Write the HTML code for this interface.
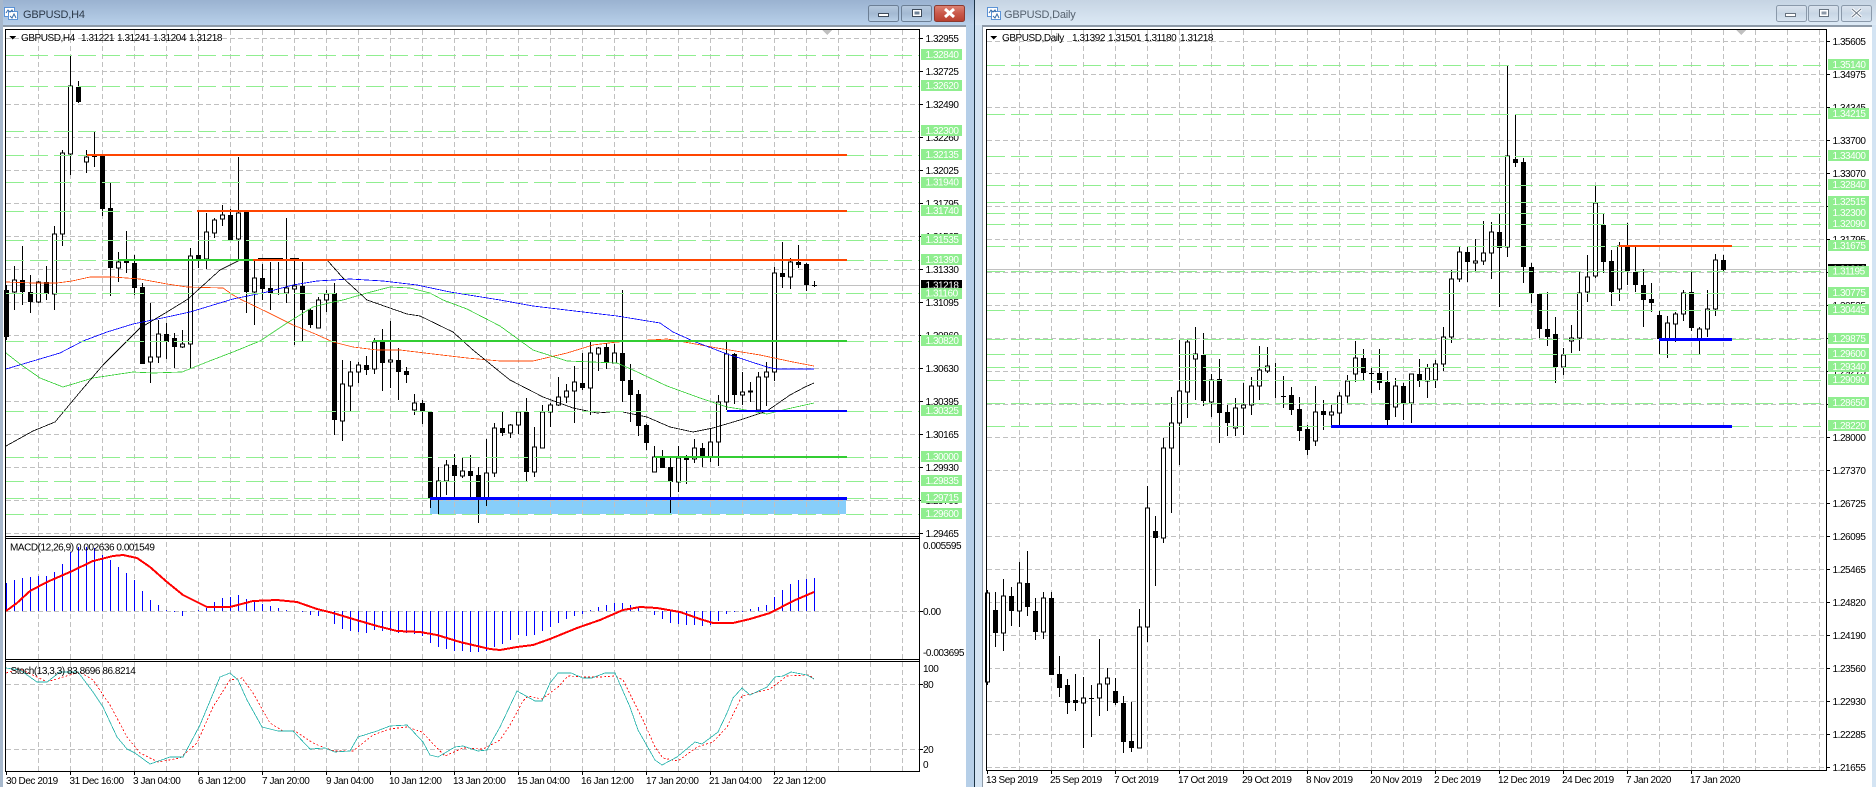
<!DOCTYPE html>
<html><head><meta charset="utf-8"><title>GBPUSD</title>
<style>
html,body{margin:0;padding:0;background:#fff;width:1876px;height:787px;overflow:hidden}
svg{display:block}
text{font-family:"Liberation Sans",sans-serif;font-size:10px;letter-spacing:-.45px;fill:#000}
.t{font-size:11px;letter-spacing:-.2px}
.w text{fill:#fff}
.c{shape-rendering:crispEdges}
.g{stroke:#c0c0c0;stroke-width:1;fill:none;stroke-dasharray:5 3}
.l{stroke:#90ee90;stroke-width:1;fill:none;stroke-dasharray:18 6}
.wk{stroke:#000;stroke-width:1;fill:none}
.bk{stroke:#000;stroke-width:5;fill:none}
.wh{stroke:#000;stroke-width:1;fill:#fff}
.m{fill:none;stroke-width:.8}
</style></head><body>
<svg width="1876" height="787" viewBox="0 0 1876 787" xmlns="http://www.w3.org/2000/svg">
<defs>
<linearGradient id="a" x1="0" y1="0" x2="0" y2="1"><stop offset="0" stop-color="#9ab2d0"/><stop offset="1" stop-color="#b8d0ea"/></linearGradient>
<linearGradient id="b" x1="0" y1="0" x2="0" y2="1"><stop offset="0" stop-color="#c6d4e3"/><stop offset="1" stop-color="#dce9f5"/></linearGradient>
<linearGradient id="r" x1="0" y1="0" x2="0" y2="1"><stop offset="0" stop-color="#dc8474"/><stop offset=".5" stop-color="#c9584a"/><stop offset="1" stop-color="#b83f2f"/></linearGradient>
<linearGradient id="n" x1="0" y1="0" x2="0" y2="1"><stop offset="0" stop-color="#b6c9de"/><stop offset=".5" stop-color="#a3b9d2"/><stop offset="1" stop-color="#bcd2e8"/></linearGradient>
<linearGradient id="o" x1="0" y1="0" x2="0" y2="1"><stop offset="0" stop-color="#dbe4ee"/><stop offset=".5" stop-color="#c8d6e5"/><stop offset="1" stop-color="#d9e5f1"/></linearGradient>
</defs>

<!-- window chrome -->
<rect x="0" y="0" width="1876" height="787" fill="#fff"/>
<rect x="0" y="0" width="974" height="25" fill="url(#a)"/>
<rect x="975" y="0" width="901" height="25" fill="url(#b)"/>
<rect x="0" y="0" width="3" height="787" fill="#a7b8cc"/>
<rect x="3" y="25" width="963" height="2" fill="#8d9aa8"/>
<rect x="966" y="25" width="8" height="762" fill="#b6cfe8"/>
<rect x="974" y="0" width="1" height="787" fill="#1c3345"/>
<rect x="975" y="25" width="8" height="762" fill="#d4e4f3"/>
<rect x="982" y="25" width="1" height="762" fill="#8d9aa8"/>
<rect x="983" y="25" width="889" height="2" fill="#8d9aa8"/>
<rect x="1872" y="25" width="4" height="762" fill="#d4e4f3"/>

<!-- icons -->
<g fill="#fff" stroke="#5b93d6" stroke-width="1" class="c">
<path d="M4.5 7.5h10v9h-10z"/><path d="M8.5 11.5h9v8h-9z"/><path d="M987.5 7.5h10v9h-10z"/><path d="M991.5 11.5h9v8h-9z"/>
</g>
<path d="M6 13l2-3 2 2 2-2 1 2M10 16l2 2 2-4 2 4" stroke="#3a6ea8" fill="none"/>
<path d="M989 13l2-3 2 2 2-2 1 2M993 16l2 2 2-4 2 4" stroke="#3a6ea8" fill="none"/>
<text class="t" x="23" y="18" style="fill:#2c3a4a">GBPUSD,H4</text>
<text class="t" x="1004" y="18" style="fill:#56626f">GBPUSD,Daily</text>

<!-- buttons -->
<g stroke="#6c7f95" stroke-width="1">
<rect x="868.5" y="5.5" width="30" height="16" rx="2" fill="url(#n)"/>
<rect x="901.5" y="5.5" width="30" height="16" rx="2" fill="url(#n)"/>
<rect x="934.5" y="5.5" width="30" height="16" rx="2" fill="url(#r)" stroke="#8c3a30"/>
<rect x="1776.5" y="5.5" width="30" height="16" rx="2" fill="url(#o)" stroke="#8a99aa"/>
<rect x="1808.5" y="5.5" width="30" height="16" rx="2" fill="url(#o)" stroke="#8a99aa"/>
<rect x="1841.5" y="5.5" width="30" height="16" rx="2" fill="url(#o)" stroke="#8a99aa"/>
</g>
<g class="c" stroke="#3d4a5a" fill="#fff">
<rect x="878.5" y="13.5" width="10" height="3"/><rect x="912.5" y="9.5" width="9" height="7" fill="#fff"/><rect x="914.5" y="11.5" width="5" height="3" fill="#6e8196" stroke="none"/>
<rect x="1785.5" y="13.5" width="10" height="3" stroke="#66727f"/><rect x="1819.5" y="9.5" width="9" height="7" stroke="#66727f"/><rect x="1821.5" y="11.5" width="5" height="3" fill="#8c99a8" stroke="none"/>
</g>
<path d="M945 9l9 8M954 9l-9 8" stroke="#fff" stroke-width="3" fill="none"/>
<path d="M1852 9l9 8M1861 9l-9 8" stroke="#fff" stroke-width="3" fill="none"/><path d="M1852 9l9 8M1861 9l-9 8" stroke="#6a7684" stroke-width="1" fill="none"/>

<!-- ============ LEFT CHART ============ -->
<g class="c">
<rect x="430" y="499" width="416" height="15" fill="#87cefa"/>
<path class="g" d="M38.5 30V771M70.5 30V771M102.5 30V771M134.5 30V771M166.5 30V771M198.5 30V771M230.5 30V771M262.5 30V771M294.5 30V771M326.5 30V771M358.5 30V771M390.5 30V771M422.5 30V771M454.5 30V771M486.5 30V771M518.5 30V771M550.5 30V771M582.5 30V771M614.5 30V771M646.5 30V771M678.5 30V771M710.5 30V771M742.5 30V771M774.5 30V771M806.5 30V771M838.5 30V771M870.5 30V771M902.5 30V771"/>
<path class="g" d="M6 38.5H919M6 71.5H919M6 104.5H919M6 137.5H919M6 170.5H919M6 203.5H919M6 236.5H919M6 269.5H919M6 302.5H919M6 335.5H919M6 368.5H919M6 401.5H919M6 434.5H919M6 467.5H919M6 500.5H919M6 533.5H919M6 611.5H919M6 684.5H919M6 749.5H919"/>
<path d="M6 285.5H919" stroke="#c0c0c0" fill="none"/>

<path class="wk" d="M6.5 285V340M14.5 266V310M22.5 246V305M30.5 275V313M38.5 281V303M46.5 266V300M54.5 226V310M62.5 150V246M70.5 56V175M78.5 81V103M86.5 150V173M94.5 132V167M92 156.5h5M102.5 155V216M110.5 183V296M118.5 252V282M126.5 231V273M134.5 255V295M142.5 283V364M150.5 303V383M158.5 320V363M166.5 323V359M174.5 333V368M182.5 330V348M190.5 248V368M198.5 212V268M206.5 213V269M214.5 218V238M222.5 205V226M230.5 209V241M238.5 157V260M246.5 211V313M254.5 260V325M262.5 264V300M270.5 262V310M278.5 262V295M276 293.5h5M286.5 218V303M294.5 258V345M302.5 262V342M310.5 308V328M318.5 297V328M326.5 290V312M334.5 283V435M342.5 360V441M350.5 361V411M358.5 362V383M366.5 356V375M374.5 338V374M382.5 329V391M390.5 321V388M398.5 348V400M406.5 367V383M414.5 394V415M422.5 400V424M430.5 412V508M438.5 467V514M446.5 460V495M454.5 454V498M462.5 458V478M470.5 455V497M478.5 467V523M486.5 439V506M494.5 423V477M502.5 412V436M510.5 424V438M518.5 411V434M526.5 398V481M534.5 427V477M542.5 405V448M550.5 403V427M558.5 377V406M566.5 384V403M574.5 366V423M582.5 353V390M590.5 342V415M598.5 347V371M606.5 343V369M614.5 344V363M622.5 290V402M630.5 364V422M638.5 390V436M646.5 424V450M654.5 446V472M662.5 450V468M670.5 458V513M678.5 446V492M686.5 455V484M694.5 439V463M702.5 443V467M710.5 428V462M718.5 395V466M726.5 342V410M734.5 353V404M742.5 372V405M750.5 382V402M758.5 372V411M766.5 362V406M774.5 267V381M782.5 242V288M790.5 258V289M798.5 245V268M806.5 263V291M814.5 281V287M812 285.5h5M258 258.5h25M290 258.5h9"/>

<path class="wh" d="M12.5 280h4v12h-4zM36.5 282h4v20h-4zM52.5 234h4v60h-4zM60.5 153h4v81h-4zM68.5 86h4v68h-4zM84.5 157h4v5h-4zM116.5 262h4v6h-4zM148.5 357h4v5h-4zM156.5 334h4v23h-4zM180.5 344h4v3h-4zM188.5 256h4v88h-4zM204.5 232h4v27h-4zM212.5 220h4v13h-4zM220.5 215h4v4h-4zM236.5 213h4v26h-4zM252.5 278h4v14h-4zM284.5 288h4v5h-4zM292.5 286h4v3h-4zM316.5 300h4v28h-4zM324.5 294h4v6h-4zM340.5 384h4v37h-4zM348.5 372h4v14h-4zM356.5 365h4v7h-4zM372.5 342h4v27h-4zM388.5 360h4v2h-4zM412.5 403h4v7h-4zM436.5 481h4v17h-4zM444.5 465h4v16h-4zM460.5 471h4v5h-4zM484.5 473h4v25h-4zM492.5 428h4v45h-4zM508.5 425h4v8h-4zM516.5 412h4v13h-4zM532.5 447h4v25h-4zM540.5 412h4v36h-4zM548.5 405h4v7h-4zM556.5 397h4v8h-4zM564.5 391h4v6h-4zM572.5 382h4v9h-4zM588.5 353h4v35h-4zM596.5 348h4v6h-4zM612.5 353h4v10h-4zM652.5 457h4v15h-4zM676.5 458h4v24h-4zM692.5 448h4v11h-4zM708.5 442h4v15h-4zM716.5 402h4v40h-4zM724.5 354h4v48h-4zM740.5 392h4v3h-4zM748.5 391h4v1h-4zM756.5 377h4v33h-4zM764.5 372h4v5h-4zM772.5 273h4v99h-4zM788.5 262h4v15h-4z"/>

<path class="bk" d="M6.5 290V337M22.5 280V292M30.5 292V302M46.5 282V294M78.5 87V102M102.5 155V209M110.5 208V268M126.5 261V263M134.5 263V288M142.5 287V364M166.5 334V342M174.5 338V347M198.5 255V259M230.5 215V240M246.5 212V292M262.5 278V289M270.5 288V293M302.5 286V310M310.5 310V325M334.5 293V420M366.5 365V370M382.5 342V363M398.5 360V372M406.5 371V375M422.5 403V412M430.5 412V498M454.5 465V476M470.5 471V476M478.5 475V498M502.5 428V433M526.5 412V472M582.5 383V388M606.5 347V363M622.5 353V381M630.5 380V395M638.5 394V426M646.5 425V443M662.5 458V468M670.5 467V482M686.5 458V460M702.5 448V457M734.5 354V395M782.5 273V277M798.5 262V265M806.5 264V285"/>

<!-- MAs -->
<polyline class="m" stroke="#ff4500" points="6,282 33,283 57,283 72,281 90,277 113,277 140,279 167,284 187,287 223,288 233,295 242,300 267,312 293,325 313,333 333,342 353,347 377,350 400,350 433,354 467,358 500,361 533,361 567,353 593,345 617,342 667,339 690,343 717,348 760,355 793,362 814,366"/>
<polyline class="m" stroke="#0000ff" points="6,369 33,361 60,353 83,341 107,332 133,324 167,317 190,312 233,299 267,292 293,285 317,281 350,279 383,281 417,285 450,292 500,300 533,306 583,312 617,316 660,323 673,332 693,341 727,354 767,367 777,369 814,369"/>
<polyline class="m" stroke="#32cd32" points="6,353 20,364 40,378 63,387 93,378 113,375 133,372 153,373 182,372 207,362 233,352 260,341 287,323 313,307 333,302 343,300 367,293 390,287 410,288 430,293 443,300 467,309 500,326 533,350 567,361 617,363 633,370 667,386 700,398 727,407 740,409 767,414 787,409 814,403"/>
<polyline class="m" stroke="#000" points="6,446 33,431 55,422 65,410 80,392 103,365 140,328 167,312 188,299 220,270 240,260 327,260 343,278 367,300 407,314 420,316 453,332 473,350 500,372 510,380 543,397 573,408 597,413 610,412"/>
<polyline class="m" stroke="#000" points="623,412 647,417 670,427 693,432 713,428 740,420 767,411 790,395 805,387 814,383"/>

<!-- green levels -->
<path class="l" d="M6 55.5H919M6 86.5H919M6 131.5H919M6 155.5H919M6 182.5H919M6 211.5H919M6 240.5H919M6 260.5H919M6 293.5H919M6 341.5H919M6 411.5H919M6 457.5H919M6 481.5H919M6 498.5H919M6 514.5H919"/>

<!-- thick levels -->
<rect x="87" y="154" width="760" height="2" fill="#ff4500"/>
<rect x="197" y="210" width="650" height="2" fill="#ff4500"/>
<rect x="118" y="259" width="135" height="2" fill="#32cd32"/>
<rect x="253" y="259" width="594" height="2" fill="#ff4500"/>
<rect x="373" y="340" width="474" height="2" fill="#32cd32"/>
<rect x="655" y="456" width="192" height="2" fill="#32cd32"/>
<rect x="727" y="410" width="120" height="2" fill="#0000ff"/>
<rect x="430" y="497" width="417" height="3" fill="#0000ff"/>

<!-- MACD -->
<path stroke="#0000ff" fill="none" d="M6.5 611V583M14.5 611V580M22.5 611V578M30.5 611V577M38.5 611V576M46.5 611V576M54.5 611V572M62.5 611V564M70.5 611V552M78.5 611V547M86.5 611V547M94.5 611V548M102.5 611V555M110.5 611V560M118.5 611V567M126.5 611V573M134.5 611V580M142.5 611V591M150.5 611V600M158.5 611V605M166.5 611V610M174.5 611V612M182.5 611V616M198.5 611V610M206.5 611V608M214.5 611V602M222.5 611V598M230.5 611V597M238.5 611V595M246.5 611V599M254.5 611V602M262.5 611V604M270.5 611V606M278.5 611V608M286.5 611V610M302.5 611V612M310.5 611V615M318.5 611V616M326.5 611V612M334.5 611V624M342.5 611V629M350.5 611V631M358.5 611V632M366.5 611V633M374.5 611V630M382.5 611V631M390.5 611V631M398.5 611V633M406.5 611V633M414.5 611V634M422.5 611V636M430.5 611V643M438.5 611V647M446.5 611V649M454.5 611V651M462.5 611V651M470.5 611V652M478.5 611V652M486.5 611V651M494.5 611V647M502.5 611V644M510.5 611V640M518.5 611V635M526.5 611V636M534.5 611V635M542.5 611V631M550.5 611V627M558.5 611V623M566.5 611V619M574.5 611V616M582.5 611V614M590.5 611V610M598.5 611V607M606.5 611V605M614.5 611V603M622.5 611V603M630.5 611V605M638.5 611V608M654.5 611V615M662.5 611V619M670.5 611V623M678.5 611V624M686.5 611V625M694.5 611V625M702.5 611V626M710.5 611V625M718.5 611V621M726.5 611V614M734.5 611V612M742.5 611V612M750.5 611V609M758.5 611V607M766.5 611V605M774.5 611V597M782.5 611V590M790.5 611V584M798.5 611V580M806.5 611V579M814.5 611V578"/>
<polyline fill="none" stroke="#ff0000" stroke-width="2" points="6,611 17,603 30,591 47,582 70,572 93,561 113,556 123,555 137,558 150,567 167,582 183,595 207,607 230,607 253,601 277,600 297,602 317,609 333,613 353,619 377,626 397,631 420,632 437,635 460,642 477,646 490,649 500,650 517,647 533,645 550,639 577,628 600,620 623,610 640,607 657,608 680,612 700,619 713,623 733,623 750,619 770,613 793,601 814,592"/>

<!-- Stoch -->
<polyline fill="none" stroke="#ff0000" stroke-width=".8" stroke-dasharray="2 2" points="6,673 20,669 37,677 47,682 63,677 80,672 93,680 110,705 127,737 140,753 158,762 180,758 197,743 213,707 230,680 242,678 253,693 270,723 283,731 295,731 313,743 325,748 335,751 353,751 373,735 390,729 407,727 422,732 437,748 445,756 463,748 483,749 500,740 510,725 523,701 528,696 542,699 558,687 568,676 585,677 600,677 615,676 623,680 633,700 643,720 655,747 663,758 678,761 697,747 713,742 727,727 742,696 758,692 770,689 787,676 808,675 814,678"/>
<polyline fill="none" stroke="#20b2aa" stroke-width=".8" points="6,668 20,670 37,682 47,682 60,672 78,672 93,692 103,707 117,737 127,749 135,753 150,764 170,757 183,757 200,725 220,677 230,673 238,680 247,700 262,727 278,731 293,731 310,749 325,748 335,752 350,751 358,737 377,731 390,726 407,725 423,742 430,755 438,757 455,747 463,746 478,751 487,750 500,727 517,691 535,701 542,701 550,683 558,673 571,673 583,678 592,678 605,673 615,673 630,707 638,730 655,760 662,765 677,757 695,742 702,744 718,732 727,713 733,698 742,688 750,695 767,687 775,677 783,676 791,672 807,675 814,679"/>

<!-- panes -->
<rect x="5" y="537" width="915" height="1" fill="#fff"/>
<rect x="5" y="660" width="915" height="1" fill="#fff"/>
<path d="M5.5 29V772M5 29.5H920M919.5 29V772M5 536.5H920M5 538.5H920M5 659.5H920M5 661.5H920M5 771.5H920" stroke="#000" fill="none"/>
<path d="M6.5 772v3M70.5 772v3M134.5 772v3M198.5 772v3M262.5 772v3M326.5 772v3M390.5 772v3M454.5 772v3M518.5 772v3M582.5 772v3M646.5 772v3M710.5 772v3M774.5 772v3M920 38.5h3M920 71.5h3M920 104.5h3M920 137.5h3M920 170.5h3M920 203.5h3M920 236.5h3M920 269.5h3M920 302.5h3M920 335.5h3M920 368.5h3M920 401.5h3M920 434.5h3M920 467.5h3M920 500.5h3M920 533.5h3M920 611.5h3M920 684.5h3M920 749.5h3" stroke="#000" fill="none"/>
<path d="M822 30h10l-5 5z" fill="#c0c0c0"/>
<path d="M9 36h7l-3.500 3.500z" fill="#000"/>
</g>

<text x="21" y="41">GBPUSD,H4</text><text x="81" y="41">1.31221</text><text x="117" y="41">1.31241</text><text x="153" y="41">1.31204</text><text x="189" y="41">1.31218</text>
<text x="10" y="550.500">MACD(12,26,9) 0.002636 0.001549</text>
<text x="10.500" y="674">Stoch(13,3,3) 83.8696 86.8214</text>

<g>
<text x="925.500" y="42">1.32955</text><text x="925.500" y="75">1.32725</text><text x="925.500" y="108">1.32490</text><text x="925.500" y="141">1.32260</text><text x="925.500" y="174">1.32025</text><text x="925.500" y="207">1.31795</text><text x="925.500" y="240">1.31565</text><text x="925.500" y="273">1.31330</text><text x="925.500" y="306">1.31095</text><text x="925.500" y="339">1.30860</text><text x="925.500" y="372">1.30630</text><text x="925.500" y="405">1.30395</text><text x="925.500" y="438">1.30165</text><text x="925.500" y="471">1.29930</text><text x="925.500" y="504">1.29700</text><text x="925.500" y="537">1.29465</text>
<text x="923" y="549">0.005595</text><text x="923" y="615">0.00</text><text x="923" y="656">-0.003695</text>
<text x="923" y="672">100</text><text x="923" y="688">80</text><text x="923" y="753">20</text><text x="923" y="768">0</text>
</g>
<rect x="921" y="280" width="41" height="11" fill="#000"/><text x="925.500" y="288.500" style="fill:#fff">1.31218</text>
<g fill="#90ee90" class="c">
<rect x="921" y="49" width="41" height="11"/><rect x="921" y="80" width="41" height="11"/><rect x="921" y="125" width="41" height="11"/><rect x="921" y="149" width="41" height="11"/><rect x="921" y="177" width="41" height="11"/><rect x="921" y="205" width="41" height="11"/><rect x="921" y="234" width="41" height="11"/><rect x="921" y="254" width="41" height="11"/><rect x="921" y="288" width="41" height="11"/><rect x="921" y="335" width="41" height="11"/><rect x="921" y="405" width="41" height="11"/><rect x="921" y="451" width="41" height="11"/><rect x="921" y="475" width="41" height="11"/><rect x="921" y="492" width="41" height="11"/><rect x="921" y="508" width="41" height="11"/>
</g>
<g class="w">
<text x="925.500" y="58">1.32840</text><text x="925.500" y="89">1.32620</text><text x="925.500" y="134">1.32300</text><text x="925.500" y="158">1.32135</text><text x="925.500" y="185.500">1.31940</text><text x="925.500" y="214">1.31740</text><text x="925.500" y="243">1.31535</text><text x="925.500" y="263">1.31390</text><text x="925.500" y="296.500">1.31160</text><text x="925.500" y="344">1.30820</text><text x="925.500" y="414">1.30325</text><text x="925.500" y="460">1.30000</text><text x="925.500" y="484">1.29835</text><text x="925.500" y="501">1.29715</text><text x="925.500" y="517">1.29600</text>
</g>
<g>
<text x="6" y="784">30 Dec 2019</text><text x="69.500" y="784">31 Dec 16:00</text><text x="133" y="784">3 Jan 04:00</text><text x="198" y="784">6 Jan 12:00</text><text x="262" y="784">7 Jan 20:00</text><text x="326" y="784">9 Jan 04:00</text><text x="389" y="784">10 Jan 12:00</text><text x="453" y="784">13 Jan 20:00</text><text x="517" y="784">15 Jan 04:00</text><text x="581" y="784">16 Jan 12:00</text><text x="646" y="784">17 Jan 20:00</text><text x="709" y="784">21 Jan 04:00</text><text x="773" y="784">22 Jan 12:00</text>
</g>

<!-- ============ RIGHT CHART ============ -->
<g class="c">
<path class="g" d="M1019.500 30V770M1051.500 30V770M1083.500 30V770M1115.500 30V770M1147.500 30V770M1179.500 30V770M1211.500 30V770M1243.500 30V770M1275.500 30V770M1307.500 30V770M1339.500 30V770M1371.500 30V770M1403.500 30V770M1435.500 30V770M1467.500 30V770M1499.500 30V770M1531.500 30V770M1563.500 30V770M1595.500 30V770M1627.500 30V770M1659.500 30V770M1691.500 30V770M1723.500 30V770M1755.500 30V770M1787.500 30V770M1819.500 30V770"/>
<path class="g" d="M987 41.500H1826M987 74.500H1826M987 107.500H1826M987 140.500H1826M987 173.500H1826M987 206.500H1826M987 239.500H1826M987 272.500H1826M987 305.500H1826M987 338.500H1826M987 371.500H1826M987 404.500H1826M987 437.500H1826M987 470.500H1826M987 503.500H1826M987 536.500H1826M987 569.500H1826M987 602.500H1826M987 635.500H1826M987 668.500H1826M987 701.500H1826M987 734.500H1826M987 767.500H1826"/>
<path d="M987 269.500H1826" stroke="#c0c0c0" fill="none"/>

<path class="wk" d="M987.500 590V685M995.500 592V647M1003.500 579V651M1011.500 587V626M1019.500 562V627M1027.500 551V616M1035.500 598V640M1043.500 592V639M1051.500 592V675M1059.500 656V697M1067.500 679V714M1075.500 674V711M1083.500 677V748M1091.500 685V737M1089 698.500h5M1099.500 639V716M1107.500 668V711M1115.500 678V705M1123.500 696V753M1131.500 702V752M1139.500 609V748M1147.500 486V642M1155.500 516V586M1163.500 438V543M1171.500 397V513M1179.500 340V465M1187.500 340V418M1195.500 327V400M1203.500 333V406M1211.500 374V417M1219.500 359V443M1227.500 405V436M1235.500 398V436M1243.500 383V435M1251.500 377V415M1259.500 346V400M1267.500 347V373M1275.500 363V398M1283.500 376V408M1281 396.500h5M1291.500 387V415M1299.500 397V441M1307.500 425V455M1315.500 386V446M1323.500 400V430M1331.500 405V427M1339.500 392V427M1347.500 375V403M1355.500 341V382M1363.500 349V380M1371.500 368V393M1369 373.500h5M1379.500 349V390M1387.500 371V425M1395.500 378V417M1403.500 383V420M1411.500 374V423M1419.500 359V387M1427.500 364V398M1435.500 360V388M1443.500 327V371M1451.500 270V343M1459.500 247V282M1467.500 247V282M1475.500 239V272M1483.500 221V265M1491.500 222V279M1499.500 214V307M1507.500 66V257M1515.500 115V167M1523.500 158V283M1531.500 263V303M1539.500 293V338M1547.500 292V346M1555.500 317V383M1563.500 348V375M1571.500 325V353M1579.500 272V351M1587.500 255V302M1595.500 186V278M1603.500 214V273M1611.500 250V306M1619.500 242V301M1627.500 223V285M1635.500 247V292M1643.500 269V327M1651.500 283V312M1659.500 311V354M1667.500 316V358M1675.500 312V342M1683.500 290V321M1691.500 272V331M1699.500 327V354M1707.500 290V337M1715.500 254V316M1723.500 255V271"/>

<path class="wh" d="M985.500 593h4v89h-4zM1001.500 596h4v37h-4zM1017.500 583h4v28h-4zM1041.500 598h4v34h-4zM1081.500 698h4v5h-4zM1097.500 684h4v14h-4zM1105.500 678h4v6h-4zM1137.500 627h4v121h-4zM1145.500 508h4v119h-4zM1161.500 448h4v90h-4zM1169.500 423h4v25h-4zM1177.500 391h4v32h-4zM1185.500 342h4v50h-4zM1193.500 354h4v5h-4zM1209.500 380h4v22h-4zM1233.500 408h4v20h-4zM1241.500 405h4v3h-4zM1249.500 386h4v19h-4zM1257.500 370h4v16h-4zM1265.500 366h4v5h-4zM1313.500 412h4v29h-4zM1329.500 412h4v3h-4zM1337.500 396h4v17h-4zM1345.500 381h4v15h-4zM1353.500 358h4v16h-4zM1393.500 386h4v21h-4zM1409.500 374h4v29h-4zM1425.500 368h4v13h-4zM1433.500 364h4v16h-4zM1441.500 337h4v27h-4zM1449.500 279h4v58h-4zM1457.500 252h4v27h-4zM1473.500 261h4v2h-4zM1481.500 253h4v8h-4zM1489.500 232h4v21h-4zM1505.500 156h4v91h-4zM1561.500 355h4v12h-4zM1569.500 338h4v3h-4zM1577.500 293h4v45h-4zM1585.500 277h4v15h-4zM1593.500 203h4v73h-4zM1617.500 246h4v43h-4zM1665.500 323h4v16h-4zM1673.500 314h4v10h-4zM1681.500 293h4v21h-4zM1697.500 329h4v10h-4zM1705.500 309h4v20h-4zM1713.500 260h4v49h-4z"/>

<path class="bk" d="M995.500 610V633M1011.500 596V611M1027.500 583V607M1035.500 611V632M1051.500 598V675M1059.500 674V688M1067.500 685V703M1075.500 700V703M1115.500 691V703M1123.500 703V742M1131.500 741V748M1155.500 531V538M1203.500 355V401M1219.500 379V413M1227.500 412V423M1291.500 395V410M1299.500 409V431M1307.500 429V450M1323.500 411V415M1363.500 358V373M1379.500 373V383M1387.500 382V420M1403.500 386V403M1419.500 374V381M1467.500 252V262M1499.500 232V248M1515.500 159V163M1523.500 162V267M1531.500 267V293M1539.500 294V329M1547.500 329V337M1555.500 334V367M1603.500 225V262M1611.500 261V292M1627.500 246V271M1635.500 272V285M1643.500 285V300M1651.500 299V303M1659.500 315V339M1691.500 292V328M1723.500 260V270"/>

<path class="l" d="M987 65.500H1826M987 114.500H1826M987 156.500H1826M987 185.500H1826M987 202.500H1826M987 213.500H1826M987 224.500H1826M987 246.500H1826M987 271.500H1826M987 293.500H1826M987 310.500H1826M987 339.500H1826M987 354.500H1826M987 367.500H1826M987 380.500H1826M987 403.500H1826M987 426.500H1826"/>

<rect x="1619" y="245" width="113" height="2" fill="#ff4500"/>
<rect x="1659" y="338" width="73" height="3" fill="#0000ff"/>
<rect x="1331" y="425" width="401" height="3" fill="#0000ff"/>

<path d="M986.500 29V771M986 29.500H1827M1826.500 29V771M986 770.500H1827" stroke="#000" fill="none"/>
<path d="M987.500 771v3M1051.500 771v3M1115.500 771v3M1179.500 771v3M1243.500 771v3M1307.500 771v3M1371.500 771v3M1435.500 771v3M1499.500 771v3M1563.500 771v3M1627.500 771v3M1691.500 771v3M1827 41.500h3M1827 74.500h3M1827 107.500h3M1827 140.500h3M1827 173.500h3M1827 206.500h3M1827 239.500h3M1827 272.500h3M1827 305.500h3M1827 338.500h3M1827 371.500h3M1827 404.500h3M1827 437.500h3M1827 470.500h3M1827 503.500h3M1827 536.500h3M1827 569.500h3M1827 602.500h3M1827 635.500h3M1827 668.500h3M1827 701.500h3M1827 734.500h3M1827 767.500h3" stroke="#000" fill="none"/>
<path d="M1736 30h10l-5 5z" fill="#c0c0c0"/>
<path d="M990 36h7l-3.500 3.500z" fill="#000"/>
</g>

<text x="1002" y="41">GBPUSD,Daily</text><text x="1072" y="41">1.31392</text><text x="1108" y="41">1.31501</text><text x="1144" y="41">1.31180</text><text x="1180" y="41">1.31218</text>

<g>
<text x="1832.500" y="45">1.35605</text><text x="1832.500" y="78">1.34975</text><text x="1832.500" y="111">1.34345</text><text x="1832.500" y="144">1.33700</text><text x="1832.500" y="177">1.33070</text><text x="1832.500" y="210">1.32440</text><text x="1832.500" y="243">1.31795</text><text x="1832.500" y="309">1.30535</text><text x="1832.500" y="342">1.29905</text><text x="1832.500" y="375">1.29275</text><text x="1832.500" y="441">1.28000</text><text x="1832.500" y="474">1.27370</text><text x="1832.500" y="507">1.26725</text><text x="1832.500" y="540">1.26095</text><text x="1832.500" y="573">1.25465</text><text x="1832.500" y="606">1.24820</text><text x="1832.500" y="639">1.24190</text><text x="1832.500" y="672">1.23560</text><text x="1832.500" y="705">1.22930</text><text x="1832.500" y="738">1.22285</text><text x="1832.500" y="771">1.21655</text>
</g>
<rect x="1828" y="264" width="38" height="11" fill="#000"/><text x="1832.500" y="272.500" style="fill:#fff">1.31218</text>
<g fill="#90ee90" class="c">
<rect x="1828" y="59" width="41" height="11"/><rect x="1828" y="108" width="41" height="11"/><rect x="1828" y="150" width="41" height="11"/><rect x="1828" y="179" width="41" height="11"/><rect x="1828" y="196" width="41" height="11"/><rect x="1828" y="207" width="41" height="11"/><rect x="1828" y="218" width="41" height="11"/><rect x="1828" y="240" width="41" height="11"/><rect x="1828" y="266" width="41" height="11"/><rect x="1828" y="287" width="41" height="11"/><rect x="1828" y="304" width="41" height="11"/><rect x="1828" y="333" width="41" height="11"/><rect x="1828" y="348" width="41" height="11"/><rect x="1828" y="361" width="41" height="11"/><rect x="1828" y="374" width="41" height="11"/><rect x="1828" y="397" width="41" height="11"/><rect x="1828" y="420" width="41" height="11"/>
</g>
<g class="w">
<text x="1832.500" y="68">1.35140</text><text x="1832.500" y="117">1.34215</text><text x="1832.500" y="159">1.33400</text><text x="1832.500" y="188">1.32840</text><text x="1832.500" y="205">1.32515</text><text x="1832.500" y="216">1.32300</text><text x="1832.500" y="227">1.32090</text><text x="1832.500" y="249">1.31675</text><text x="1832.500" y="274.500">1.31195</text><text x="1832.500" y="296">1.30775</text><text x="1832.500" y="313">1.30445</text><text x="1832.500" y="342">1.29875</text><text x="1832.500" y="357">1.29600</text><text x="1832.500" y="370">1.29340</text><text x="1832.500" y="383">1.29090</text><text x="1832.500" y="406">1.28650</text><text x="1832.500" y="429">1.28220</text>
</g>
<g>
<text x="986" y="783">13 Sep 2019</text><text x="1050" y="783">25 Sep 2019</text><text x="1114" y="783">7 Oct 2019</text><text x="1178" y="783">17 Oct 2019</text><text x="1242" y="783">29 Oct 2019</text><text x="1306" y="783">8 Nov 2019</text><text x="1370" y="783">20 Nov 2019</text><text x="1434" y="783">2 Dec 2019</text><text x="1498" y="783">12 Dec 2019</text><text x="1562" y="783">24 Dec 2019</text><text x="1626" y="783">7 Jan 2020</text><text x="1690" y="783">17 Jan 2020</text>
</g>
</svg>
</body></html>
